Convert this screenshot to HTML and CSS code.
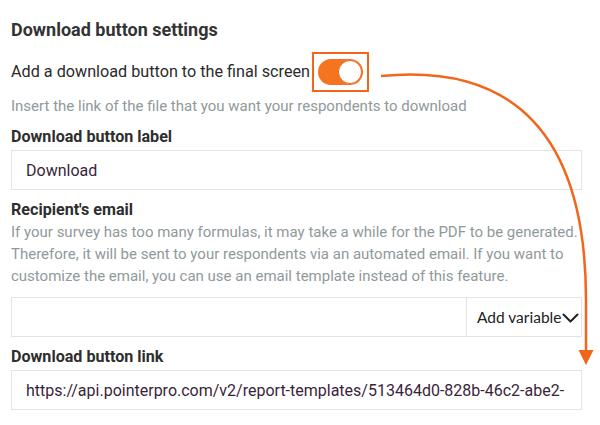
FILE: index.html
```
<!DOCTYPE html>
<html>
<head>
<meta charset="utf-8">
<link rel="stylesheet" href="styles.css">
</head>
<body>
<div class="panel">
  <h2 class="title">Download button settings</h2>
  <div class="toggle-row">
    <span class="toggle-text">Add a download button to the final screen</span>
    <span class="highlight"><span class="switch"><span class="knob"></span></span></span>
  </div>
  <p class="hint">Insert the link of the file that you want your respondents to download</p>
  <label class="label label-first">Download button label</label>
  <div class="input"><span class="value">Download</span></div>
  <label class="label">Recipient's email</label>
  <p class="desc">If your survey has too many formulas, it may take a while for the PDF to be generated. Therefore, it will be sent to your respondents via an automated email. If you want to customize the email, you can use an email template instead of this feature.</p>
  <div class="input input-split">
    <span class="field"></span>
    <span class="addvar">Add variable<svg class="chev" width="17" height="10" viewBox="0 0 17 10"><path d="M1.5 1.5 L8.5 8.5 L15.5 1.5" fill="none" stroke="#222" stroke-width="2" stroke-linecap="round" stroke-linejoin="round"/></svg></span>
  </div>
  <label class="label">Download button link</label>
  <div class="input"><span class="value url">https://api.pointerpro.com/v2/report-templates/513464d0-828b-46c2-abe2-</span></div>
</div>
<svg class="arrow" width="600" height="425" viewBox="0 0 600 425">
  <path d="M381 76 C 480 66, 586 100, 586 300 L 586 352" fill="none" stroke="#f2661c" stroke-width="2.5"/>
  <polygon points="578.5,350 593.5,350 586,365" fill="#f2661c"/>
</svg>
</body>
</html>
```
FILE: styles.css
```
html, body {
  margin: 0;
  padding: 0;
  background: #fff;
}
body {
  width: 600px;
  height: 425px;
  overflow: hidden;
  position: relative;
  font-family: Roboto, "Noto Sans", Arial, sans-serif;
  color: #2a2a2a;
}
.panel {
  display: flex;
  flex-direction: column;
  padding: 19px 0 0 11px;
  width: 571px;
}
.title {
  margin: 0;
  font-size: 18px;
  line-height: 22px;
  font-weight: 700;
  color: #333;
}
.toggle-row {
  display: flex;
  align-items: center;
  margin-top: 11px;
  height: 40px;
}
.toggle-text {
  font-size: 16.2px;
  line-height: 20px;
  color: #2a2a2a;
}
.highlight {
  display: flex;
  align-items: center;
  justify-content: center;
  box-sizing: border-box;
  width: 57px;
  height: 40px;
  border: 2.5px solid #f2661c;
  margin-left: 2px;
}
.switch {
  display: flex;
  justify-content: flex-end;
  align-items: center;
  box-sizing: border-box;
  width: 45px;
  height: 26px;
  border-radius: 13px;
  background: #f47420;
  padding: 1px;
}
.knob {
  box-sizing: border-box;
  width: 24px;
  height: 24px;
  border-radius: 50%;
  background: #fff;
  border: 1px solid #f06a1a;
}
.hint {
  margin: 4px 0 0;
  font-size: 15px;
  line-height: 20px;
  color: #8f999b;
}
.label {
  display: block;
  margin-top: 10px;
  font-size: 16.1px;
  line-height: 20px;
  font-weight: 700;
  color: #2e2e2e;
}
.label-first {
  margin-top: 11px;
}
.input {
  display: flex;
  align-items: center;
  box-sizing: border-box;
  height: 40px;
  margin-top: 3px;
  border: 1px solid #e3e3e3;
  background: #fff;
  overflow: hidden;
}
.value {
  padding-left: 14px;
  font-size: 16px;
  color: #3a1f3a;
  white-space: nowrap;
}
.desc {
  margin: 1px 0 0;
  font-size: 15px;
  line-height: 22px;
  color: #8f999b;
}
.input-split {
  margin-top: 10px;
  align-items: stretch;
}
.field {
  flex: 1;
}
.addvar {
  display: flex;
  align-items: center;
  gap: 1px;
  width: 115px;
  box-sizing: border-box;
  padding-left: 10px;
  border-left: 1px solid #e3e3e3;
  font-family: Lato, "Open Sans", sans-serif;
  font-size: 15.5px;
  color: #222;
}
.chev {
  margin-top: 1px;
}
.arrow {
  position: absolute;
  left: 0;
  top: 0;
  pointer-events: none;
}
```
